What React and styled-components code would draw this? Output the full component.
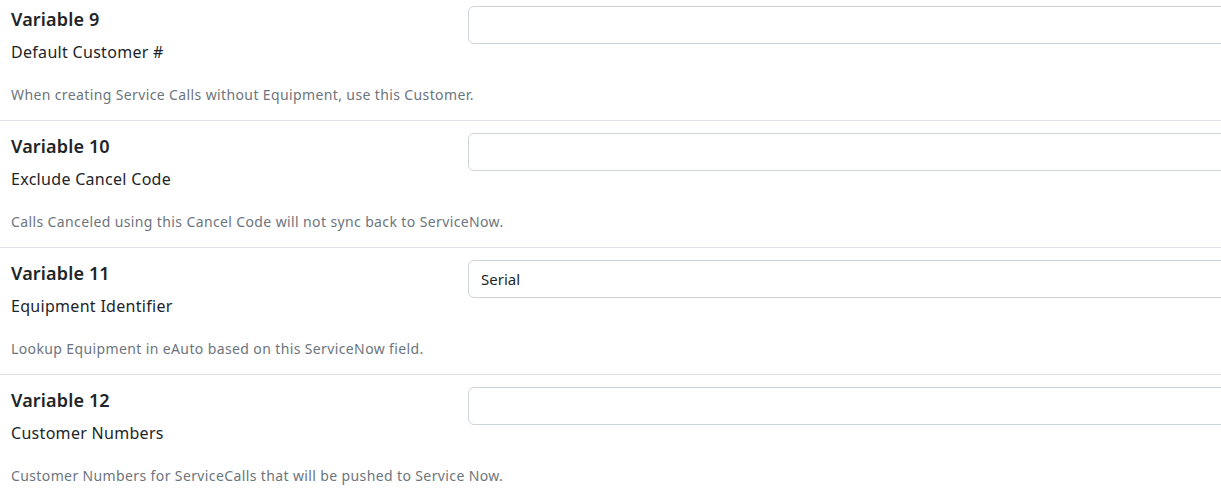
import React from "react";
import styled, { createGlobalStyle } from "styled-components";

const Global = createGlobalStyle`
  html, body { margin: 0; padding: 0; background: #fff; overflow: hidden; }
  body { font-family: "Noto Sans", "Open Sans", sans-serif; color: #212529; }
`;

const List = styled.div`
  margin-top: -6px;
  width: 1240px;
`;

const Row = styled.div`
  display: grid;
  grid-template-columns: 457px 1fr;
  grid-template-rows: auto 1fr;
  padding-left: 11px;
  height: 126px;
  border-bottom: 1px solid #dee2e6;
`;

const Labels = styled.div`
  display: flex;
  flex-direction: column;
`;

const Title = styled.h5`
  margin: 13px 0 0;
  font-size: 18px;
  line-height: 24px;
  font-weight: 600;
  letter-spacing: 0.15px;
  color: #212529;
`;

const Subtitle = styled.div`
  margin-top: 9px;
  font-size: 16px;
  line-height: 24px;
  letter-spacing: 0.3px;
  color: #212529;
`;

const Help = styled.div`
  grid-column: 1 / -1;
  margin-top: 20px;
  font-size: 14px;
  line-height: 21px;
  letter-spacing: 0.38px;
  white-space: nowrap;
  color: #6c757d;
`;

const Field = styled.div`
  padding-top: 12px;
`;

const Input = styled.input`
  box-sizing: border-box;
  width: 100%;
  height: 38px;
  padding: 6px 12px;
  border: 1px solid #ced4da;
  border-radius: 6px;
  font-family: inherit;
  font-size: 15px;
  color: #212529;
  background: #fff;
  outline: none;
`;

const rows = [
  { n: 9, label: "Default Customer #", help: "When creating Service Calls without Equipment, use this Customer.", value: "" },
  { n: 10, label: "Exclude Cancel Code", help: "Calls Canceled using this Cancel Code will not sync back to ServiceNow.", value: "" },
  { n: 11, label: "Equipment Identifier", help: "Lookup Equipment in eAuto based on this ServiceNow field.", value: "Serial" },
  { n: 12, label: "Customer Numbers", help: "Customer Numbers for ServiceCalls that will be pushed to Service Now.", value: "" },
];

export default function App() {
  return (
    <>
      <Global />
      <List>
        {rows.map((r) => (
          <Row key={r.n}>
            <Labels>
              <Title>Variable {r.n}</Title>
              <Subtitle>{r.label}</Subtitle>
            </Labels>
            <Field>
              <Input defaultValue={r.value} />
            </Field>
            <Help>{r.help}</Help>
          </Row>
        ))}
      </List>
    </>
  );
}
